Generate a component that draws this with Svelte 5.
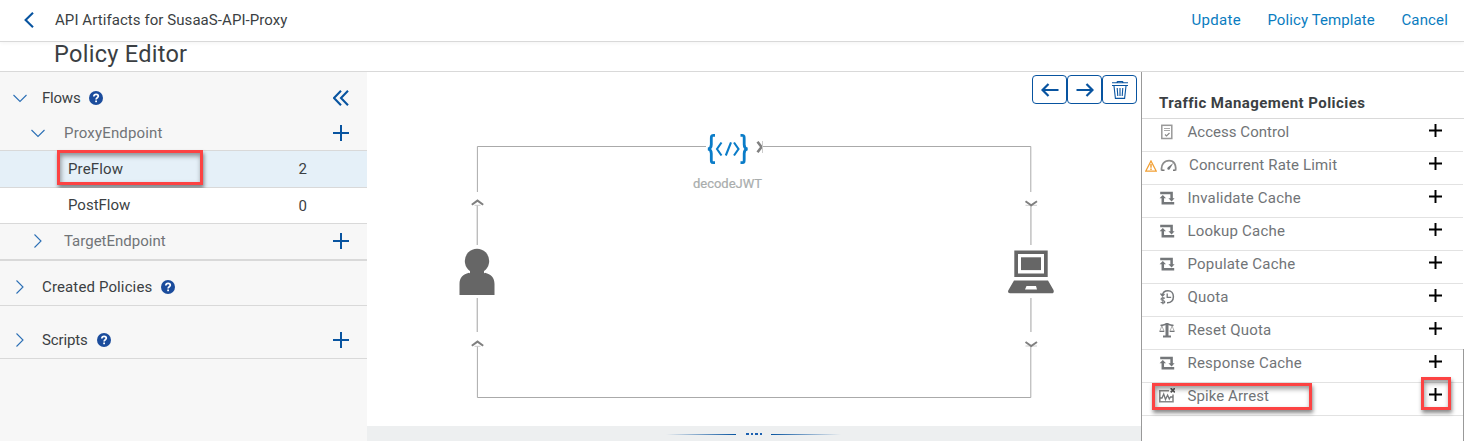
<script>
  const policies = [
    { name: 'Access Control', icon: 'doc' },
    { name: 'Concurrent Rate Limit', icon: 'gauge', warn: true },
    { name: 'Invalidate Cache', icon: 'cache' },
    { name: 'Lookup Cache', icon: 'cache' },
    { name: 'Populate Cache', icon: 'cache' },
    { name: 'Quota', icon: 'quota' },
    { name: 'Reset Quota', icon: 'scale' },
    { name: 'Response Cache', icon: 'cache' },
    { name: 'Spike Arrest', icon: 'spike', marked: true }
  ];
</script>

{#snippet chevron(open)}
  <svg class="chev" viewBox="0 0 16 16">
    <path d={open ? 'M1.5 5L8 11.5L14.5 5' : 'M4.5 1.5L11 8L4.5 14.5'} />
  </svg>
{/snippet}

{#snippet help()}
  <svg class="help" viewBox="0 0 14 14">
    <circle cx="7" cy="7" r="7" fill="#1b4c9c" />
    <path d="M4.8 5.5C4.9 3.9 6 3.4 7.1 3.4C8.4 3.4 9.3 4.1 9.3 5.2C9.3 6.7 7.1 6.7 7.1 8.4" fill="none" stroke="#fff" stroke-width="1.7" />
    <rect x="6.2" y="9.5" width="1.8" height="1.7" fill="#fff" />
  </svg>
{/snippet}

{#snippet add()}
  <svg class="add" viewBox="0 0 16 16"><path d="M8 0V16M0 8H16" stroke="#0854a0" stroke-width="2" /></svg>
{/snippet}

{#snippet policyIcon(kind)}
  <svg class="picon" viewBox="0 0 16 16" fill="none" stroke="#74777a">
    {#if kind === 'doc'}
      <rect x="2.8" y="1.3" width="10" height="13.2" stroke="#999" stroke-width="1.5" />
      <path d="M5 4.5H11M5 6.5H11" stroke="#aaa" />
      <path d="M6 10.5L7.5 12L10.5 9" stroke="#888" stroke-width="1.2" />
    {:else if kind === 'gauge'}
      <path d="M1.2 13.5C.2 7.5 4 3.6 8.6 3.6C13.5 3.6 16 8 15 13.5" stroke="#8c8c8c" stroke-width="1.8" />
      <path d="M1 13.3H4M12.5 13.3H15" stroke="#777" stroke-width="1.5" />
      <path d="M12.8 6L7.4 10.2C6 11.5 7.2 13.6 9 12.4Z" fill="#74777a" stroke="none" />
    {:else if kind === 'cache'}
      <path d="M1.2 3.1H12.6V10M15.2 13.2H3.8V7" stroke-width="2.5" />
      <path d="M9.4 8.2H15.6L12.6 11.6ZM.6 8.2H7L3.8 4.9Z" fill="#74777a" stroke="none" />
    {:else if kind === 'quota'}
      <path d="M3.4 6.5C3.8 3.3 6.3 1.8 9 1.8C12.4 1.8 14.4 4.5 14.4 7.8C14.4 11.5 12 14 8 13.8" stroke-width="1.5" />
      <path d="M8.2 4.5V8.3H12.2M1.5 4.5L3.5 7L5.5 5" stroke-width="1.3" />
      <path d="M6 9.3C3.5 8.2 1.5 9.2 2.3 10.7C3 11.8 5.8 11.2 5.8 12.9C5.8 14.3 3.3 14.3 1.7 13.3M3.9 8V15.2" stroke-width="1.2" />
    {:else if kind === 'scale'}
      <path d="M8 1V14" stroke-width="3" />
      <path d="M1.5 3.2C5 3.9 6 2 8 2C10 2 11 3.9 14.5 3.2" stroke-width="1.6" />
      <path d="M2.9 4L.8 9H5L2.9 4M13.1 4L11 9H15.2L13.1 4" stroke="#999" stroke-width=".8" />
      <path d="M.5 9.5H5.3M10.7 9.5H15.5" stroke-width="1.2" />
      <path d="M4 14.5H12" stroke-width="2" />
    {:else}
      <path d="M10 2.8H.8V13.7H14V6.5" stroke="#888" stroke-width="1.6" />
      <path d="M1 10H3L4.7 6L6.5 11.5L8.6 7L10.3 11L11.5 9H14" stroke-width="1.3" />
      <path d="M11.7 .2L15.9 4.4M15.9 .2L11.7 4.4" stroke="#555" stroke-width="1.8" />
    {/if}
  </svg>
{/snippet}

<div class="page">
  <header class="bar">
    <svg class="back" viewBox="0 0 10 16"><path d="M9 .8L1.6 8L9 15.2" /></svg>
    <span class="crumb">API Artifacts for SusaaS-API-Proxy</span>
    <nav>
      <a class="update">Update</a>
      <a class="template">Policy Template</a>
      <a class="cancel">Cancel</a>
    </nav>
  </header>
  <div class="title">Policy Editor</div>

  <main>
    <aside>
      <section class="row flows">
        {@render chevron(true)}<span class="t-flows">Flows</span>{@render help()}
        <svg class="collapse" viewBox="0 0 16 16"><path d="M8 .8L1 8L8 15.2M15 .8L8 8L15 15.2" /></svg>
      </section>
      <section class="row sub proxy">{@render chevron(true)}<span class="t-proxy">ProxyEndpoint</span>{@render add()}</section>
      <section class="row leaf active">
        <div class="mark"></div>
        <span class="t-pre">PreFlow</span><b>2</b>
      </section>
      <section class="row leaf"><span class="t-post">PostFlow</span><b>0</b></section>
      <section class="row sub target">{@render chevron(false)}<span>TargetEndpoint</span>{@render add()}</section>
      <section class="row created">{@render chevron(false)}<span class="t-created">Created Policies</span>{@render help()}</section>
      <section class="row scripts">{@render chevron(false)}<span class="t-scripts">Scripts</span>{@render help()}{@render add()}</section>
    </aside>

    <div class="editor">
      <svg class="flow" viewBox="367 72 774 354">
        <g fill="none" stroke="#aaa" stroke-width="1">
          <path d="M477.4 192V146.5H706M763 146.5H1030.8V192" />
          <path d="M477.3 205V245M477.3 298V332M1030.9 205V245M1030.9 298V332" stroke="#bdbdbd" stroke-width="1.4" />
          <path d="M477.4 346V397.5H1030.8V346" />
        </g>
        <g fill="none" stroke="#808080" stroke-width="2">
          <path d="M471.8 204.8L477.5 200.6L483.2 204.8M471.8 345.8L477.5 341.6L483.2 345.8" />
          <path d="M474.5 205.3H480.5M474.5 346.3H480.5M1025.5 205.3H1037M1025.5 346H1037" stroke="#ccc" stroke-width="1" />
          <path d="M1025.5 201.3L1031.2 205.3L1037 201.3M1025.5 342L1031.2 346L1037 342" />
          <path d="M757.5 141.8L761.5 147L757.5 152.2" stroke-width="2.6" />
          <path d="M762.5 141V153" stroke="#ccc" stroke-width="1" />
        </g>
        <g fill="#666">
          <circle cx="477" cy="261" r="12.2" />
          <path d="M459.5 295V284C459.5 277.5 463 274.3 469 272.8C474 276.5 480 276.5 485 272.8C491 274.3 494.5 277.5 494.5 284V295Z" />
          <rect x="470" y="268" width="14" height="10" />
          <path fill-rule="evenodd" d="M1014.3 250.5H1047.7V277H1014.3ZM1018 254V273.5H1044V254Z" />
          <rect x="1021" y="257.3" width="20" height="12.8" />
          <path fill-rule="evenodd" d="M1014 280.5H1048L1053.5 290C1054.2 292 1053.5 293.2 1052 293.2H1010C1008.3 293.2 1007.5 292 1008.5 290ZM1026.5 286L1025 289.5H1037L1036 286Z" />
        </g>
        <g fill="none" stroke="#0a7cc8" stroke-width="2.8">
          <path d="M715 135.3H713.2C711.2 135.3 711.3 137 711.3 139V144.5C711.3 147 710.5 148.5 708 148.8C710.5 149.2 711.3 151 711.3 153.5V159C711.3 161.5 711.2 162.7 713.2 162.7H715" />
          <path d="M740.5 135.3H742.3C744.3 135.3 744.2 137 744.2 139V144.5C744.2 147 745 148.5 747.5 148.8C745 149.2 744.2 151 744.2 153.5V159C744.2 161.5 744.3 162.7 742.3 162.7H740.5" />
          <path d="M721.5 142.5L717 149L721.5 155.5M734 142.5L738.5 149L734 155.5M731 142.3L725.8 155.5" stroke-width="2.1" />
        </g>
        <text class="node" x="693" y="188" textLength="69">decodeJWT</text>
      </svg>
      <div class="tools">
        <button aria-label="Undo"><svg viewBox="0 0 18 14"><path d="M17.5 7H1.5M7.5 1L1.5 7L7.5 13" /></svg></button>
        <button aria-label="Redo"><svg viewBox="0 0 18 14"><path d="M.5 7H16.5M10.5 1L16.5 7L10.5 13" /></svg></button>
        <button aria-label="Delete"><svg class="trash" viewBox="0 0 16 18"><path d="M0 1.8H16M5 1.5Q5 .5 6 .5H10Q11 .5 11 1.5M0 4.5H16M2 5L3.4 17.4H12.6L14 5M5.2 7L5.8 15M8 7V15M10.8 7L10.2 15" /></svg></button>
      </div>
      <footer><i class="l"></i><span class="dots"><i></i><i></i><i></i><i></i></span><i class="r"></i></footer>
    </div>

    <div class="policies">
      <h2><span>Traffic Management Policies</span></h2>
      {#each policies as p, i}
        <div class="policy" class:warned={p.warn}>
          {#if p.warn}
            <svg class="warn" viewBox="0 0 12 12"><path d="M6 1L11.3 11.2H.7Z" fill="none" stroke="#f2a034" stroke-width="1.3" /><path d="M6 4V7.7M6 8.5V10" stroke="#f2a034" stroke-width="1.5" /></svg>
          {/if}
          {@render policyIcon(p.icon)}
          <span class="p{i}">{p.name}</span>
          <svg class="padd" viewBox="0 0 12 12"><path d="M6 0V12M0 6H12" stroke="#000" stroke-width="1.8" /></svg>
          {#if p.marked}<div class="mark name"></div><div class="mark plus"></div>{/if}
        </div>
      {/each}
      <div class="scroll"></div>
    </div>
  </main>
</div>

<style>
  .page { width: 1464px; height: 441px; overflow: hidden; display: flex; flex-direction: column; background: #fff; color: #3b3f43; font: 15px/20px Roboto, "Noto Sans", sans-serif; }
  .page * { box-sizing: border-box; }
  svg { flex: none; display: block; }
  span, a { white-space: nowrap; }
  .bar { height: 42px; flex: none; display: flex; align-items: center; padding: 0 16px 2px 24px; border-bottom: 1px solid #d9d9d9; box-shadow: 0 1px 4px #0000000d; }
  .back { width: 10px; height: 16px; }
  .back path, .collapse path { fill: none; stroke: #0854a0; stroke-width: 2.1; }
  .crumb { margin-left: 21px; letter-spacing: .07px; }
  nav { margin-left: auto; display: flex; gap: 26.5px; color: #0a7cc0; }
  .update { letter-spacing: .3px; }
  .template { letter-spacing: .1px; }
  .cancel { letter-spacing: .15px; }
  .title { height: 30px; flex: none; padding-left: 54px; font-size: 23.5px; line-height: 24px; letter-spacing: .28px; border-bottom: 1px solid #d9d9d9; }
  main { height: 369px; display: flex; }
  aside { width: 367px; background: #f7f7f7; }
  .row { display: flex; align-items: center; border-bottom: 1px solid #d9d9d9; padding-right: 18px; }
  .chev { width: 16px; height: 16px; }
  .chev path { fill: none; stroke: #2b6fb5; stroke-width: 1.1; }
  .help { width: 14px; height: 14px; margin-left: 9px; }
  .add, .collapse { width: 16px; height: 16px; margin-left: auto; }
  .flows { height: 44px; padding: 8px 18px 0 12px; border: 0; }
  .flows span, .created span, .scripts span { margin-left: 14px; }
  .t-flows { letter-spacing: -.22px; }
  .t-proxy { letter-spacing: .17px; }
  .t-pre { letter-spacing: .15px; }
  .t-created { letter-spacing: .13px; }
  .t-scripts { letter-spacing: -.12px; }
  .sub { color: #717477; padding-left: 30px; }
  .sub span { margin-left: 18px; }
  .proxy { height: 35px; }
  .leaf { padding-left: 68px; position: relative; background: #fff; }
  .leaf.active { background: #e5f0f8; height: 37px; }
  .leaf:not(.active) { height: 36px; }
  .leaf b { font-weight: 400; margin-left: auto; margin-right: 42px; }
  .t-post { margin-bottom: 2px; }
  .target { height: 37px; padding-bottom: 1px; border-bottom-width: 2px; }
  .created { height: 45px; padding: 8px 18px 0 12px; }
  .scripts { height: 53px; padding: 15px 18px 0 12px; }
  .mark { position: absolute; left: 57px; top: -1px; width: 146px; height: 35px; border: 3px solid #fc4343; box-shadow: 1px 3px 4px #0007, inset 1px 3px 5px #0006; }
  .editor { width: 774px; position: relative; display: flex; flex-direction: column; }
  .flow { width: 774px; height: 354px; }
  .node { font-size: 13px; fill: #a9adad; stroke: #a9adad; stroke-width: .2; }
  .tools { position: absolute; right: 4px; top: 3px; display: flex; }
  button { width: 35px; height: 29px; padding: 0; display: flex; align-items: center; justify-content: center; background: #fff; border: 1px solid #0854a0; border-radius: 4px; }
  button svg { width: 18px; height: 14px; fill: none; stroke: #0854a0; stroke-width: 2.2; }
  button .trash { width: 16px; height: 18px; stroke-width: 1.1; }
  footer { height: 15px; background: #edeff0; display: flex; align-items: center; justify-content: center; padding: 0 1px 0 0; }
  footer > i { width: 70px; height: 1px; margin-top: 2px; }
  .l { background: linear-gradient(to right, transparent, #0854a0); }
  .r { background: linear-gradient(to left, transparent, #0854a0); }
  .dots { display: flex; gap: 2px; margin: 0 9px 0 10px; }
  .dots i { width: 2.5px; height: 2px; background: #1b60b0; }
  .policies { width: 323px; position: relative; border-left: 1px solid #999; }
  h2 { margin: 0; height: 47px; padding: 21px 0 0 17px; font: 700 15px/20px Roboto, sans-serif; letter-spacing: .44px; border-bottom: 1px solid #d9d9d9; }
  .policy { height: 33px; width: 321px; position: relative; display: flex; align-items: center; padding: 0 21px 6px 17px; color: #717477; border-bottom: 1px solid #e2e2e2; }
  .picon { width: 16px; height: 16px; }
  .policy span { margin-left: 12.5px; letter-spacing: .2px; }
  .policy .p0 { letter-spacing: .03px; }
  .policy .p1 { margin-left: 12px; letter-spacing: .15px; }
  .policy .p8 { letter-spacing: .08px; }
  .policy.warned { padding-left: 3px; }
  .warn { width: 12px; height: 12px; margin: 2px 3px 0 0; }
  .warned .picon { width: 17px; }
  .padd { width: 13px; height: 13px; margin: 0 0 3px auto; }
  .mark.name { left: 10px; top: 0; width: 160px; height: 27px; }
  .mark.plus { left: 279px; top: -6px; width: 30px; height: 33px; }
  .scroll { position: absolute; right: 0; top: 277px; width: 1px; height: 92px; background: #999; }
</style>
